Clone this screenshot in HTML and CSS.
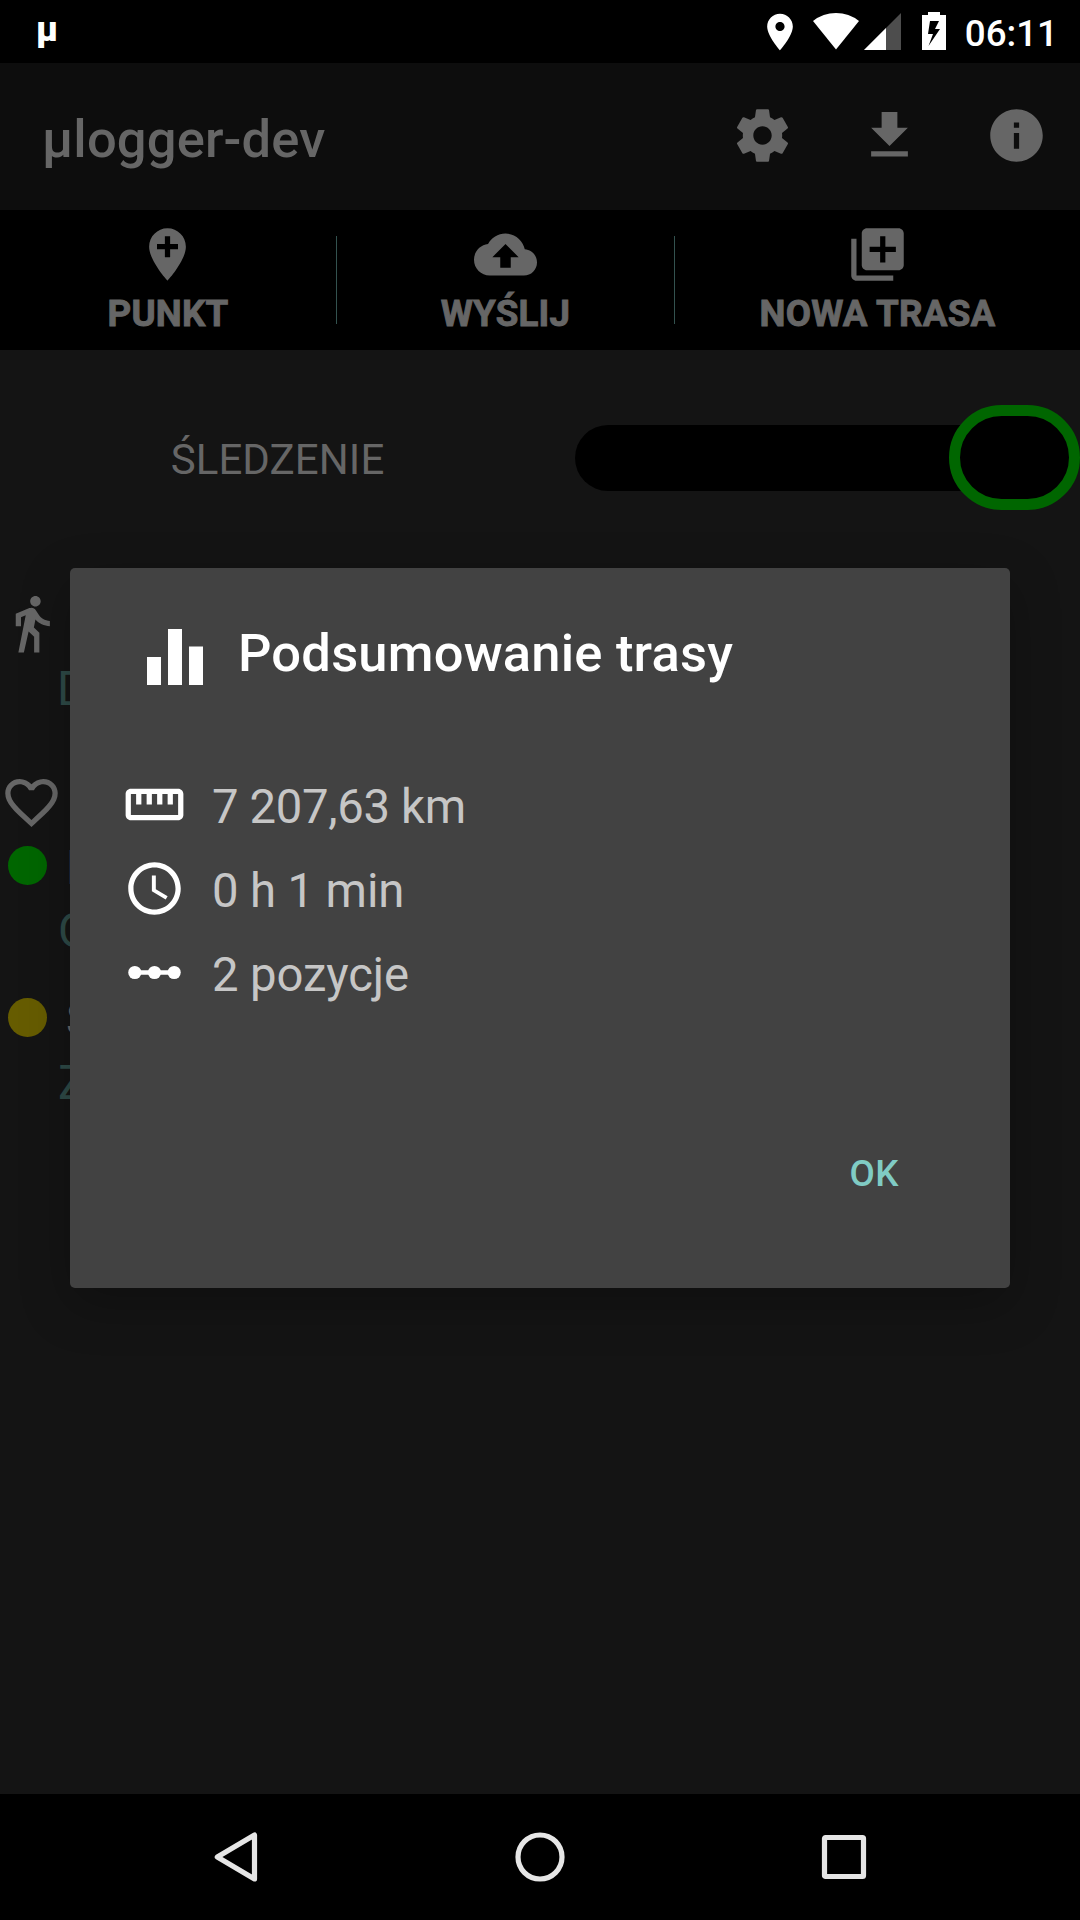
FILE: index.html
```html
<!DOCTYPE html>
<html lang="pl">
<head>
<meta charset="utf-8">
<title>µlogger-dev</title>
<link rel="stylesheet" href="styles.css">
</head>
<body>
<div class="screen">
  <header class="status-bar">
    <span class="status-app">µ</span>
    <svg class="status-pin" viewBox="0 0 24 24"><path d="M12 2C8.13 2 5 5.13 5 9c0 5.25 7 13 7 13s7-7.750 7-13c0-3.870-3.130-7-7-7zm0 9.500c-1.380 0-2.500-1.120-2.500-2.500s1.120-2.500 2.500-2.500 2.500 1.120 2.500 2.500-1.120 2.500-2.500 2.500z"/></svg>
    <svg class="status-wifi" viewBox="0 0 46 37"><path d="M0 8Q10 0 23 0T46 8L23 36.500z"/></svg>
    <svg class="status-cell" viewBox="0 0 37 37"><path class="cell-off" d="M0 37L37 0V37z"/><path d="M0 37L22 15V37z"/></svg>
    <svg class="status-battery" viewBox="0 0 24 38"><path fill-rule="evenodd" d="M6 0H18V3H24V38H0V3H6zM8 9L6 22H11L6.500 34L18 17H13L17 9z"/></svg>
    <time class="status-time">06:11</time>
  </header>

  <div class="app-bar">
    <h1 class="app-title">µlogger-dev</h1>
    <div class="app-actions">
      <svg class="icon" viewBox="0 0 24 24"><path d="M19.430 12.980c.04-.32.07-.64.07-.98s-.03-.66-.07-.98l2.110-1.650c.19-.15.24-.42.12-.64l-2-3.460c-.12-.22-.39-.3-.61-.22l-2.490 1c-.52-.4-1.080-.73-1.690-.98l-.38-2.650C14.460 2.180 14.250 2 14 2h-4c-.25 0-.46.18-.49.42l-.38 2.650c-.61.25-1.170.59-1.690.98l-2.490-1c-.23-.09-.49 0-.61.22l-2 3.460c-.13.22-.07.49.12.64l2.110 1.650c-.04.32-.07.65-.07.98s.03.66.07.98l-2.110 1.650c-.19.15-.24.42-.12.64l2 3.460c.12.22.39.3.61.22l2.490-1c.52.4 1.080.73 1.690.98l.38 2.650c.03.24.24.42.49.42h4c.25 0 .46-.18.49-.42l.38-2.650c.61-.25 1.170-.59 1.690-.98l2.490 1c.23.09.49 0 .61-.22l2-3.460c.12-.22.07-.49-.12-.64l-2.110-1.650zM12 15.500c-1.930 0-3.500-1.570-3.500-3.500s1.570-3.500 3.500-3.500 3.500 1.570 3.500 3.500-1.570 3.500-3.500 3.500z"/></svg>
      <svg class="icon" viewBox="0 0 24 24"><path d="M19 9h-4V3H9v6H5l7 7 7-7zM5 18v2h14v-2H5z"/></svg>
      <svg class="icon" viewBox="0 0 24 24"><path d="M12 2C6.480 2 2 6.480 2 12s4.480 10 10 10 10-4.480 10-10S17.520 2 12 2zm1 15h-2v-6h2v6zm0-8h-2V7h2v2z"/></svg>
    </div>
  </div>

  <nav class="button-bar">
    <div class="bar-button">
      <svg class="icon icon-point" viewBox="0 0 24 24"><path d="M12 2C8.140 2 5 5.140 5 9c0 5.250 7 13 7 13s7-7.750 7-13c0-3.860-3.140-7-7-7zm4 8h-3v3h-2v-3H8V8h3V5h2v3h3v2z"/></svg>
      <span>PUNKT</span>
    </div>
    <div class="bar-divider"></div>
    <div class="bar-button">
      <svg class="icon" viewBox="0 0 24 24"><path d="M19.350 10.040C18.670 6.590 15.640 4 12 4 9.110 4 6.600 5.640 5.350 8.040 2.340 8.360 0 10.910 0 14c0 3.310 2.690 6 6 6h13c2.760 0 5-2.240 5-5 0-2.640-2.050-4.780-4.650-4.960zM14 13v4h-4v-4H7l5-5 5 5h-3z"/></svg>
      <span>WYŚLIJ</span>
    </div>
    <div class="bar-divider"></div>
    <div class="bar-button">
      <svg class="icon" viewBox="0 0 24 24"><path d="M4 6H2v14c0 1.100.9 2 2 2h14v-2H4V6zm16-4H8c-1.100 0-2 .9-2 2v12c0 1.100.9 2 2 2h12c1.100 0 2-.9 2-2V4c0-1.100-.9-2-2-2zm-1 9h-4v4h-2v-4H9V9h4V5h2v4h4v2z"/></svg>
      <span>NOWA TRASA</span>
    </div>
  </nav>

  <main class="content">
    <div class="tracking">
      <span class="tracking-label">ŚLEDZENIE</span>
      <div class="switch"><div class="switch-thumb"></div></div>
    </div>
    <div class="summary">
      <svg class="icon" viewBox="0 0 24 24"><path d="M13.500 5.500c1.100 0 2-.9 2-2s-.9-2-2-2-2 .9-2 2 .9 2 2 2zM9.800 8.900L7 23h2.100l1.800-8 2.100 2v6h2v-7.500l-2.100-2 .6-3C14.800 12 16.800 13 19 13v-2c-1.900 0-3.500-1-4.300-2.400l-1-1.600c-.4-.6-1-1-1.700-1-.3 0-.5.1-.8.1L6 8.300V13h2V9.600l1.800-.7"/></svg>
      <p class="detail">D</p>
    </div>
    <div class="statuses">
      <svg class="icon" viewBox="0 0 24 24"><path d="M16.500 3c-1.740 0-3.410.81-4.500 2.090C10.910 3.810 9.240 3 7.500 3 4.420 3 2 5.420 2 8.500c0 3.780 3.400 6.860 8.550 11.540L12 21.350l1.450-1.320C18.600 15.360 22 12.280 22 8.500 22 5.420 19.580 3 16.500 3zm-4.400 15.550l-.1.1-.1-.1C7.140 14.240 4 11.390 4 8.500 4 6.500 5.500 5 7.500 5c1.540 0 3.040.99 3.570 2.360h1.870C13.460 5.990 14.960 5 16.500 5c2 0 3.500 1.500 3.500 3.500 0 2.890-3.140 5.740-7.900 10.050z"/></svg>
      <div class="status-row"><i class="dot dot-ok"></i><span>L</span></div>
      <p class="detail detail-status">O</p>
      <div class="status-row status-sync"><i class="dot dot-wait"></i><span>S</span></div>
      <p class="detail detail-status">Z</p>
    </div>
  </main>

  <footer class="nav-bar">
    <svg viewBox="0 0 52 52"><path d="M44.500 4V48L7.300 26z"/></svg>
    <svg viewBox="0 0 52 52"><circle cx="26" cy="26" r="22"/></svg>
    <svg viewBox="0 0 52 52"><rect x="6.500" y="6.500" width="39" height="39" rx="1"/></svg>
  </footer>

  <section class="dialog" role="dialog">
    <div class="dialog-head">
      <svg class="dialog-icon" viewBox="0 0 24 24"><path d="M4 12h4v8H4zM10 4h4v16h-4zM16 9h4v11h-4z"/></svg>
      <h2 class="dialog-title">Podsumowanie trasy</h2>
    </div>
    <ul class="stats">
      <li><svg class="icon" viewBox="0 0 24 24"><path d="M21 6H3c-1.100 0-2 .9-2 2v8c0 1.100.9 2 2 2h18c1.100 0 2-.9 2-2V8c0-1.100-.9-2-2-2zm0 10H3V8h2v4h2V8h2v4h2V8h2v4h2V8h2v4h2V8h2v8z"/></svg><span class="distance">7 207,63 km</span></li>
      <li><svg class="icon" viewBox="0 0 24 24"><path d="M11.990 2C6.470 2 2 6.480 2 12s4.470 10 9.990 10C17.520 22 22 17.520 22 12S17.520 2 11.990 2zM12 20c-4.420 0-8-3.580-8-8s3.580-8 8-8 8 3.580 8 8-3.580 8-8 8zm.5-13H11v6l5.250 3.150.75-1.230-4.500-2.670z"/></svg><span>0 h 1 min</span></li>
      <li><svg class="icon" viewBox="0 0 24 24"><path d="M4.500 11.100h15v1.800h-15z"/><circle cx="4.500" cy="12" r="2.500"/><circle cx="12" cy="12" r="2.500"/><circle cx="19.500" cy="12" r="2.500"/></svg><span>2 pozycje</span></li>
    </ul>
    <div class="dialog-actions"><button class="ok" type="button">OK</button></div>
  </section>
</div>
</body>
</html>
```
FILE: styles.css
```css
* { box-sizing: border-box; }
body, h1, h2, p, ul { margin: 0; padding: 0; }
body { background: #141414; }

.screen {
  position: relative;
  display: flex;
  flex-direction: column;
  width: 1080px;
  height: 1920px;
  overflow: hidden;
  background: #141414;
  color: #666;
  font-family: Roboto, "Noto Sans", sans-serif;
}
svg { display: block; flex: none; fill: currentColor; }
.icon { width: 63px; height: 63px; }

.status-bar {
  display: flex;
  align-items: flex-start;
  height: 63px;
  padding: 12px 22px 0 36px;
  background: #000;
  color: #fff;
}
.status-app {
  margin-right: auto;
  font-size: 35px;
  font-weight: 900;
  line-height: 36px;
}
.status-pin { width: 44px; height: 44px; margin-top: -2px; }
.status-wifi { width: 46px; height: 37px; margin: 1px 5px 0 11px; }
.status-cell { width: 37px; height: 37px; margin-top: 1px; }
.cell-off { fill: #4d4d4d; }
.status-battery { width: 24px; height: 38px; margin: 0 19px 0 21px; }
.status-time { font-size: 36.75px; font-weight: 500; line-height: 43px; }

.app-bar {
  display: flex;
  align-items: center;
  justify-content: space-between;
  height: 147px;
  padding: 0 32px 2px 42px;
  background: #0d0d0d;
}
.app-title {
  padding-top: 6px;
  font-size: 52.5px;
  font-weight: 500;
  letter-spacing: .15px;
  line-height: 62px;
}
.app-actions { display: flex; gap: 64px; }

.button-bar {
  display: grid;
  grid-template-columns: 336px 1px 337px 1px 1fr;
  height: 140px;
  background: #000;
}
.bar-button {
  display: flex;
  flex-direction: column;
  align-items: center;
  padding-top: 13px;
  font-size: 36.75px;
  font-weight: 700;
  letter-spacing: .2px;
  line-height: 43px;
  -webkit-text-stroke: .9px #666;
}
.bar-button span { margin-top: 6px; }
.icon-point { margin-right: 1px; }
.bar-divider { height: 88px; margin-top: 26px; background: #33524f; }

.content { flex: 1; }
.tracking {
  display: flex;
  align-items: center;
  justify-content: space-between;
  margin-top: 55px;
  height: 105px;
}
.tracking-label {
  width: 555px;
  padding-top: 5px;
  text-align: center;
  font-size: 42px;
  letter-spacing: .1px;
  line-height: 50px;
}
.switch {
  display: flex;
  align-items: center;
  justify-content: flex-end;
  width: 505.5px;
  height: 66px;
  border-radius: 33px;
  background: #000;
}
.switch-thumb {
  flex: none;
  width: 131px;
  height: 105px;
  border: 11px solid #060;
  border-radius: 53px;
  background: #000;
}

.summary { margin-top: 82px; }
.statuses { margin-top: 54px; }
.detail {
  margin: 6px 0 0 57px;
  color: #2e4a47;
  font-size: 47.25px;
  line-height: 56px;
}
.detail-status { margin: 7px 0 0 58px; }
.status-row {
  display: flex;
  gap: 19px;
  margin-top: 6px;
  padding-left: 8px;
  font-size: 47.25px;
  line-height: 56px;
}
.status-sync { margin-top: 33px; }
.dot { width: 39px; height: 39px; margin-top: 6px; border-radius: 50%; }
.dot-ok { background: #060; }
.dot-wait { background: #665c00; }

.nav-bar {
  display: flex;
  justify-content: center;
  align-items: center;
  gap: 252px;
  height: 126px;
  background: #000;
}
.nav-bar svg {
  width: 52px;
  height: 52px;
  fill: none;
  stroke: #e6e6e6;
  stroke-width: 5.2px;
  stroke-linejoin: round;
}

/* Modal window over the dimmed screen */
.dialog {
  position: absolute;
  left: 70px;
  top: 568px;
  display: flex;
  flex-direction: column;
  width: 940px;
  height: 720px;
  padding: 47px 81px 0 53px;
  border-radius: 5px;
  background: #424242;
  box-shadow: 0 16px 50px rgba(0, 0, 0, .25);
  color: #fff;
}
.dialog-head { display: flex; padding-left: 10px; gap: 21px; height: 84px; }
.dialog-icon { width: 84px; height: 84px; }
.dialog-title {
  padding-top: 7px;
  font-size: 52.5px;
  font-weight: 500;
  letter-spacing: .2px;
  line-height: 62px;
}
.stats { margin-top: 74px; list-style: none; }
.stats li { display: flex; gap: 26px; height: 84px; }
.stats span {
  padding-top: 6px;
  color: #c6c6c6;
  font-size: 47.25px;
  letter-spacing: -.12px;
  line-height: 56px;
}
.stats .distance { letter-spacing: -.33px; }
.dialog-actions { display: flex; justify-content: flex-end; margin-top: 127px; }
.ok {
  padding: 0 30px;
  border: 0;
  background: none;
  color: #80cbc4;
  font: 500 36.75px/43px Roboto, "Noto Sans", sans-serif;
  letter-spacing: .5px;
}
```
